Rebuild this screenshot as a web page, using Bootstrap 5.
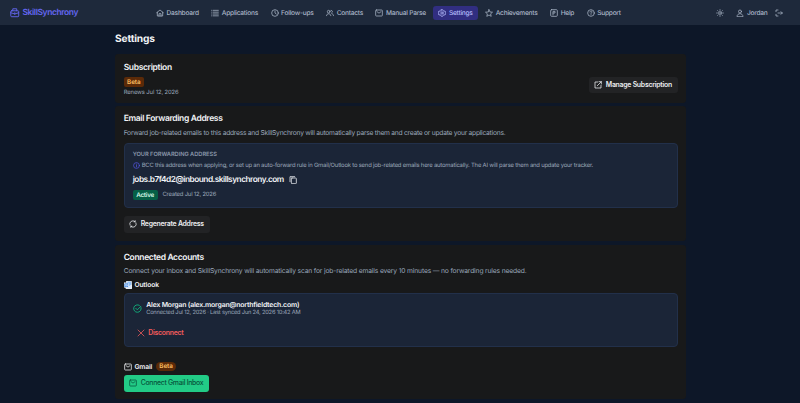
<!DOCTYPE html>
<html lang="en">
<head>
    <meta charset="UTF-8">
    <meta name="viewport" content="width=device-width, initial-scale=1.0">
    <title>SkillSynchrony - Settings</title>
    <link href="https://cdn.jsdelivr.net/npm/bootstrap@5.3.3/dist/css/bootstrap.min.css" rel="stylesheet">

    <style>
        body {
            background-color: #0d1728;
            color: #f1f3f6;
            font-family: Inter, "Liberation Sans", sans-serif;
            font-size: 6.7px;
            line-height: 10px;
            letter-spacing: -0.25px;
            height: 403px;
            overflow: hidden;
            text-rendering: geometricPrecision;
        }
        svg {
            fill: none;
            stroke: currentColor;
            stroke-width: 2.3;
            stroke-linecap: round;
            stroke-linejoin: round;
            width: 8px;
            height: 8px;
            flex: none;
        }
        .topbar {
            height: 24.5px;
            background-color: #1e293b;
            color: #a9b5c6;
            font-size: 6.6px;
            font-weight: 500;
            padding: 1px 17px 0 10px;
        }
        .brand {
            width: 141px;
            color: #6467f2;
            font-size: 8.5px;
            font-weight: 600;
            letter-spacing: -0.42px;
            gap: 3px;
        }
        .brand svg { width: 9.5px; height: 9.5px; }
        .topbar .nav-link {
            color: inherit;
            padding: 0 5px;
            height: 14px;
            gap: 2.6px;
            margin-right: 2.5px;
            white-space: nowrap;
        }
        .topbar .nav-link.active {
            background-color: #312e81;
            color: #b3bafa;
            border-radius: 3px;
        }
        .page { width: 571px; margin-left: 115px; }
        h1 { font-size: 10.2px; line-height: 14px; font-weight: 700; letter-spacing: -0.15px; margin: 7.5px 0 8px; }
        h2 { font-size: 8.5px; line-height: 12px; font-weight: 600; letter-spacing: -0.35px; margin: 0; }
        .panel {
            background-color: #18191a;
            border-radius: 3px;
            padding: 7px 8px 0 8.7px;
            margin-bottom: 3.5px;
        }
        .sub-panel { height: 48.5px; padding-top: 7.5px; }
        .mail-panel { height: 135px; }
        .accounts-panel { height: 154px; }
        .hint { color: #9ba8ba; }
        .tiny { font-size: 5.9px; line-height: 8px; letter-spacing: -0.2px; }
        .tag {
            font-size: 6.3px;
            line-height: 10px;
            font-weight: 600;
            letter-spacing: -0.1px;
            padding: 0 3.4px;
            border-radius: 2px;
            background-color: #5b2a08;
            color: #fbbf62;
        }
        .tag-pill { border-radius: 5px; line-height: 9px; padding: 0 3.5px; margin-left: 1px; }
        .tag-ok { background-color: #065f46; color: #d4f8e6; padding: 0 3.5px; letter-spacing: -0.25px; }
        .action {
            height: 16.5px;
            border-radius: 3px;
            background-color: #222325;
            color: #eceef0;
            font-size: 6.9px;
            font-weight: 600;
            line-height: 10px;
            letter-spacing: -0.25px;
            padding: 0 6px 0 5.5px;
            gap: 3.5px;
            border: 0;
            white-space: nowrap;
        }
        .action-green { background-color: #22cb86; color: #07543c; font-weight: 500; letter-spacing: -0.3px; }
        .action-red { background: none; color: #f25c5c; }
        .inset {
            background-color: #1b2537;
            border: 1px solid #22304a;
            border-radius: 4px;
            padding: 0 8px;
        }
        .label-caps { font-size: 5.7px; font-weight: 600; letter-spacing: -.03px; color: #8a97aa; line-height: 8px; }

        .sub-tag { margin-top: 3px; }
        .sub-renew { margin-top: 2px; letter-spacing: -0.13px; }
        .manage { margin-top: 15px; }
        .mail-hint { margin-top: 2.5px; }
        .mail-inset { height: 65.5px; margin: 5px 0 8px; padding-top: 7px; }
        .bcc { margin-top: 3px; gap: 2px; }
        .bcc svg { color: #5558e8; width: 7px; height: 7px; }
        .address { font-size: 8.3px; line-height: 12px; font-weight: 600; letter-spacing: -0.49px; margin-top: 4px; gap: 5.5px; }
        .created { margin-top: 4px; gap: 5px; }
        .accounts-hint { margin-top: 2.5px; letter-spacing: -0.14px; }
        .provider { font-weight: 600; letter-spacing: -0.12px; margin-top: 4px; gap: 2.7px; }
        .outlook-inset { height: 54px; margin-top: 3px; padding-top: 5.5px; }
        .person { gap: 4.5px; }
        .person svg { width: 9px; height: 9px; color: #12b981; }
        .person-name { font-size: 6.9px; font-weight: 600; letter-spacing: -0.18px; line-height: 9px; }
        .synced { font-size: 5.7px; line-height: 8px; letter-spacing: -0.19px; }
        .action-red { margin: 8px 0 0 -1.5px; }
        .gmail { margin-top: 14.5px; margin-bottom: 3.5px; }
    </style>
</head>
<body>
    <svg class="d-none">
        <symbol id="mail" viewBox="0 0 24 24"><rect x="2" y="3" width="20" height="18" rx="2"/><path d="M6 8l6 4.500 6-4.500"/></symbol>
    </svg>

    <header class="topbar d-flex align-items-center">
        <a class="brand d-flex align-items-center text-decoration-none" href="#">
            <svg viewBox="0 0 24 24"><path d="M7 7V2h10v5M2 12l10 3 10-3M12 12v4"/><rect x="2" y="7" width="20" height="15" rx="2"/></svg>
            SkillSynchrony
        </a>
        <nav class="nav flex-nowrap">
            <a class="nav-link d-flex align-items-center" href="#">
                <svg viewBox="0 0 24 24"><path d="M2 11l10-8 10 8M4 10v11h16V10M9 21v-7h6v7"/></svg>Dashboard</a>
            <a class="nav-link d-flex align-items-center" href="#">
                <svg viewBox="0 0 24 24"><path d="M7 4h15M7 9.5h15M7 15h15M7 20.5h15M2 4h1M2 9.5h1M2 15h1M2 20.5h1"/></svg>Applications</a>
            <a class="nav-link d-flex align-items-center" href="#">
                <svg viewBox="0 0 24 24"><circle cx="12" cy="12" r="10"/><path d="M12 6v6l4 3"/></svg>Follow-ups</a>
            <a class="nav-link d-flex align-items-center" href="#">
                <svg viewBox="0 0 24 24"><circle cx="8" cy="8" r="4"/><path d="M1.5 20c0-8 13-8 13 0M15 4c5-1 6 6 2 8M18 14c3 1 4.500 3 4.500 6"/></svg>Contacts</a>
            <a class="nav-link d-flex align-items-center" href="#">
                <svg><use href="#mail"/></svg>Manual Parse</a>
            <a class="nav-link active d-flex align-items-center" href="#">
                <svg viewBox="0 0 24 24"><path d="M10 2h4l1 3 3 1.500 3-.5 2 3.500-2 2.500 2 2.500-2 3.500-3-.5-3 1.500-1 3h-4l-1-3-3-1.500-3 .5-2-3.500 2-2.500-2-2.500L3 6l3 .5L9 5z"/><circle cx="12" cy="12" r="3.5"/></svg>Settings</a>
            <a class="nav-link d-flex align-items-center" href="#">
                <svg viewBox="0 0 24 24"><path d="M12 2l3 7 7.500.6-5.700 5 1.800 7.400L12 18l-6.600 4 1.800-7.400-5.700-5L9 9z"/></svg>Achievements</a>
            <a class="nav-link d-flex align-items-center" href="#">
                <svg viewBox="0 0 24 24"><rect x="2" y="2" width="20" height="20" rx="3"/><path d="M9 18V7h6v5H9"/></svg>Help</a>
            <a class="nav-link d-flex align-items-center" href="#">
                <svg viewBox="0 0 24 24"><circle cx="12" cy="12" r="10"/><path d="M9 9c0-4 6-4 6-.5 0 2.500-3 2.500-3 5M12 17v.5"/></svg>Support</a>
        </nav>
        <div class="d-flex align-items-center ms-auto">
            <svg class="me-1" viewBox="0 0 24 24"><circle cx="12" cy="12" r="4"/><path d="M12 2v2M12 20v2M2 12h2M20 12h2M5 5l1.500 1.500M17.500 17.500L19 19M5 19l1.500-1.500M17.500 6.500L19 5"/></svg>
            <a class="nav-link d-flex align-items-center ms-1 ps-1" href="#">
                <svg viewBox="0 0 24 24"><circle cx="12" cy="7.5" r="4.5"/><path d="M3 22c0-11 18-11 18 0z"/></svg>Jordan</a>
            <svg viewBox="0 0 24 24"><path d="M9 3H3v5M3 16v5h6M9 12h13M18 8l4 4-4 4"/></svg>
        </div>
    </header>

    <main class="page">
        <h1>Settings</h1>

        <section class="panel sub-panel d-flex justify-content-between">
            <div>
                <h2>Subscription</h2>
                <div class="d-flex sub-tag"><span class="tag">Beta</span></div>
                <div class="hint tiny sub-renew">Renews Jul 12, 2026</div>
            </div>
            <button class="action d-flex align-items-center manage">
                <svg viewBox="0 0 24 24"><path d="M11 3H3v18h18v-8M15 2h7v7M22 2L10 14"/></svg>Manage Subscription
            </button>
        </section>

        <section class="panel mail-panel">
            <h2>Email Forwarding Address</h2>
            <div class="hint mail-hint">Forward job-related emails to this address and SkillSynchrony will automatically parse them and create or update your applications.</div>
            <div class="inset mail-inset">
                <div class="label-caps">YOUR FORWARDING ADDRESS</div>
                <div class="hint tiny d-flex align-items-center bcc">
                    <svg viewBox="0 0 24 24"><circle cx="12" cy="12" r="10"/><path d="M12 11v6M12 7v.5"/></svg>
                    <span>BCC this address when applying, or set up an auto-forward rule in Gmail/Outlook to send job-related emails here automatically. The AI will parse them and update your tracker.</span>
                </div>
                <div class="address d-flex align-items-center">
                    <span>jobs.b7f4d2@inbound.skillsynchrony.com</span>
                    <svg viewBox="0 0 24 24"><rect x="7" y="6" width="15" height="17" rx="2"/><path d="M3 17V2h14"/></svg>
                </div>
                <div class="d-flex align-items-center created">
                    <span class="tag tag-ok">Active</span>
                    <span class="hint tiny">Created Jul 12, 2026</span>
                </div>
            </div>
            <button class="action d-flex align-items-center">
                <svg viewBox="0 0 24 24"><path d="M3 15.500A9.500 9.500 0 0 1 18 4.700M21 8.500A9.500 9.500 0 0 1 6 19.300M18.500 2v3.500H15M5.500 22v-3.500H9"/></svg>Regenerate Address
            </button>
        </section>

        <section class="panel accounts-panel">
            <h2>Connected Accounts</h2>
            <div class="hint accounts-hint">Connect your inbox and SkillSynchrony will automatically scan for job-related emails every 10 minutes — no forwarding rules needed.</div>
            <div class="provider d-flex align-items-center">
                <svg viewBox="0 0 24 24" stroke="none"><rect x="7" y="1" width="16" height="22" rx="2" fill="#8fc0f8"/><path d="M7 12l8 5 8-5v9a2 2 0 0 1-2 2H7z" fill="#d3e6fc"/><rect x="0" y="6" width="13" height="13" rx="2" fill="#2878dc"/><circle cx="6.5" cy="12.5" r="3" fill="none" stroke="#fff" stroke-width="1.8"/></svg>Outlook
            </div>
            <div class="inset outlook-inset">
                <div class="d-flex align-items-center person">
                    <svg viewBox="0 0 24 24"><path d="M21.500 9.500A10 10 0 1 1 17 3.500M7.500 11.500l4 4L21 6"/></svg>
                    <div>
                        <div class="person-name">Alex Morgan (alex.morgan@northfieldtech.com)</div>
                        <div class="hint synced">Connected Jul 12, 2026 · Last synced Jun 24, 2026 10:42 AM</div>
                    </div>
                </div>
                <button class="action action-red d-flex align-items-center">
                    <svg viewBox="0 0 24 24"><path d="M3 3l18 18M21 3L3 21"/></svg>Disconnect
                </button>
            </div>
            <div class="provider gmail d-flex align-items-center">
                <svg><use href="#mail"/></svg>Gmail<span class="tag tag-pill">Beta</span>
            </div>
            <button class="action action-green d-flex align-items-center">
                <svg><use href="#mail"/></svg>Connect Gmail Inbox
            </button>
        </section>
    </main>

    <script src="https://cdn.jsdelivr.net/npm/bootstrap@5.3.3/dist/js/bootstrap.bundle.min.js"></script>
</body>
</html>
